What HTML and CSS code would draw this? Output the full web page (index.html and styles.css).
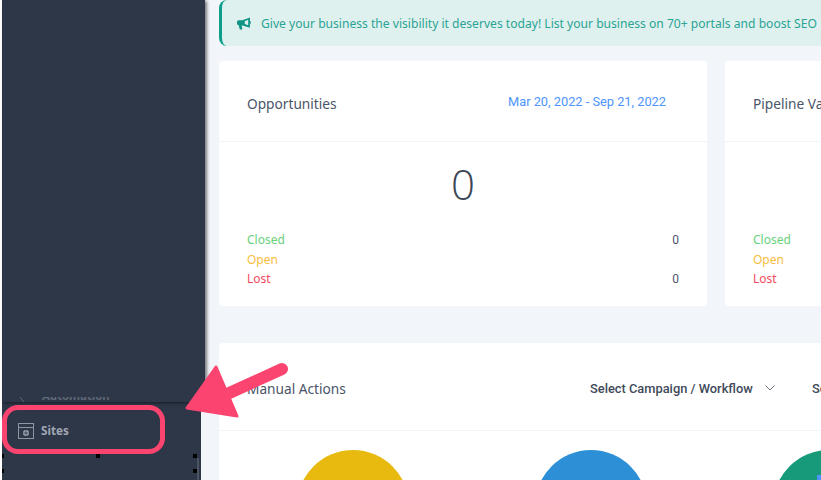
FILE: index.html
```html
<!DOCTYPE html>
<html lang="en">
<head>
  <meta charset="UTF-8">
  <title>Dashboard</title>
  <link rel="stylesheet" href="styles.css">
</head>
<body>
  <div class="page">
    <!-- Sidebar -->
    <aside class="sidebar">
      <div class="sidebar-panel">
        <div class="panel-peek">
          <svg width="6" height="6" viewBox="0 0 6 6" fill="none" stroke="#5f6876"><path d="M1 0L5 5"/></svg>
          <span>Automation</span>
        </div>
      </div>
      <div class="nav-item">
        <svg class="nav-icon" width="16" height="16" viewBox="0 0 16 16" fill="none" stroke="#8f96a3" stroke-width="1">
          <rect x="0.5" y="0.5" width="15" height="15"/>
          <path d="M0.5 4.5H15.5"/>
          <circle cx="8" cy="10" r="3" fill="#a0a7b3" stroke="none"/>
          <path d="M8 7.5V12.5M5.5 10H10.5" stroke="#2d3748" stroke-width="0.8"/>
        </svg>
        <span>Sites</span>
      </div>
    </aside>

    <!-- Main content -->
    <main class="main">
      <div class="banner">
        <svg class="banner-icon" width="14" height="13" viewBox="0 0 13 12" fill="#0e9384">
          <path d="M12 0.5 L5 3 H1.5 C0.7 3 0 3.7 0 4.5 V6 C0 6.8 0.7 7.5 1.5 7.5 L2.6 11.5 H5 L4.3 7.6 L12 10 Z"/>
          <path d="M12.2 3.4 C13.2 4 13.2 6.2 12.2 6.8 Z"/>
          <path d="M10.4 2.6 L7.2 3.9 V6.4 L10.4 7.7 Z" fill="#dff1ef"/>
        </svg>
        <span class="banner-text">Give your business the visibility it deserves today! List your business on 70+ portals and boost SEO</span>
      </div>

      <div class="card-row">
        <section class="card stat-card">
          <div class="card-head">
            <h2>Opportunities</h2>
            <span class="date-range">Mar 20, 2022 - Sep 21, 2022</span>
          </div>
          <div class="stat-body">
            <div class="stat-total">0</div>
            <div class="stat-line"><span class="closed">Closed</span><span class="num">0</span></div>
            <div class="stat-line"><span class="open">Open</span></div>
            <div class="stat-line"><span class="lost">Lost</span><span class="num">0</span></div>
          </div>
        </section>
        <section class="card stat-card">
          <div class="card-head">
            <h2>Pipeline Value</h2>
          </div>
          <div class="stat-body">
            <div class="stat-total">&nbsp;</div>
            <div class="stat-line"><span class="closed">Closed</span></div>
            <div class="stat-line"><span class="open">Open</span></div>
            <div class="stat-line"><span class="lost">Lost</span></div>
          </div>
        </section>
      </div>

      <section class="card actions-card">
        <div class="actions-head">
          <h2>Manual Actions</h2>
          <div class="filters">
            <span class="filter">Select Campaign / Workflow
              <svg width="10" height="6" viewBox="0 0 10 6" fill="none" stroke="#6b7280" stroke-width="1"><path d="M0.5 0.5L5 5L9.5 0.5"/></svg>
            </span>
            <span class="filter">Select User</span>
          </div>
        </div>
        <div class="circles">
          <div class="circle yellow"></div>
          <div class="circle blue"></div>
          <div class="circle green"></div>
        </div>
      </section>
    </main>
  </div>

  <!-- Annotations on top of the screenshot -->
  <div class="highlight"></div>
  <i class="handle h1"></i><i class="handle h2"></i><i class="handle h3"></i><i class="handle h4"></i><i class="handle h5"></i>
  <i class="resize-edge"></i>
  <i class="corner-mark"></i>
  <svg class="arrow" width="110" height="70" viewBox="184 358 110 70">
    <path d="M282 369 L225 395" stroke="#fb4570" stroke-width="12" stroke-linecap="round" fill="none"/>
    <path d="M216 367 L237 416 L187 408 Z" fill="#fb4570" stroke="#fb4570" stroke-width="3" stroke-linejoin="round"/>
  </svg>
</body>
</html>
```

FILE: styles.css
```css
/* General */
html, body {
  margin: 0;
  padding: 0;
  height: 480px;
  overflow: hidden;
  background: #fff;
}

body {
  position: relative;
  font-family: 'Noto Sans', sans-serif;
  color: #4a5568;
}

.page {
  display: flex;
  height: 480px;
  padding-left: 2px;
  box-sizing: border-box;
}

/* Sidebar */
.sidebar {
  flex: 0 0 199px;
  min-width: 0;
  background: #2d3748;
  position: relative;
  z-index: 1;
}

.sidebar-panel {
  display: flex;
  align-items: flex-end;
  width: 203px;
  height: 402px;
  background: #2d3748;
  box-shadow: 2px 1px 3px rgba(0, 0, 0, 0.5);
}

.panel-peek {
  display: flex;
  align-items: flex-start;
  height: 5px;
  overflow: hidden;
  padding-left: 17px;
  font-size: 11.3px;
  font-weight: 700;
  line-height: 5px;
  color: #5f6876;
}

.panel-peek span {
  margin-left: 17px;
  position: relative;
  top: -4px;
}

.nav-item {
  display: flex;
  align-items: center;
  gap: 7px;
  padding: 21px 0 0 16px;
  font-size: 11.7px;
  font-weight: 700;
  color: #a0a7b3;
}

.nav-item span {
  position: relative;
  top: -1px;
}

/* Main */
.main {
  flex: 1;
  min-width: 0;
  background: #f2f6fa;
  padding-left: 18px;
  overflow: hidden;
}

.banner {
  display: flex;
  align-items: center;
  width: 640px;
  height: 46px;
  box-sizing: border-box;
  padding-left: 15px;
  background: #dff1ef;
  border-left: 3px solid #0e9e8c;
  border-radius: 8px 0 0 8px;
  white-space: nowrap;
}

.banner-icon {
  flex: none;
  margin-right: 10px;
}

.banner-text {
  font-size: 12.1px;
  color: #2aa394;
}

.card {
  background: #fff;
  border-radius: 4px;
}

.card h2 {
  margin: 0;
  font-size: 13.7px;
  font-weight: 400;
  color: #4a5568;
  white-space: nowrap;
}

.card-row {
  display: flex;
  gap: 18px;
  margin-top: 15px;
  width: 1000px;
}

/* Stat cards */
.stat-card {
  flex: 0 0 488px;
  height: 245px;
}

.card-head {
  display: flex;
  align-items: center;
  justify-content: space-between;
  height: 81px;
  box-sizing: border-box;
  padding: 4px 41px 0 28px;
  border-bottom: 1px solid #f0f4f8;
}

.date-range {
  font-family: Roboto, sans-serif;
  font-size: 12.8px;
  color: #4d94ff;
  margin-bottom: 4px;
}

.stat-body {
  padding: 0 28px;
}

.stat-total {
  height: 88px;
  padding-top: 13px;
  box-sizing: border-box;
  text-align: center;
  font-family: 'Open Sans', sans-serif;
  font-size: 42px;
  line-height: 58px;
  font-weight: 300;
  color: #3c4656;
}

.stat-line {
  display: flex;
  justify-content: space-between;
  height: 19.5px;
  line-height: 20.5px;
  font-size: 12px;
}

.num {
  font-family: Roboto, sans-serif;
  color: #4a5568;
}

.closed { color: #68d27a; }
.open { color: #f9bd3d; }
.lost { color: #f4495d; }

/* Manual actions */
.actions-card {
  width: 700px;
  height: 200px;
  margin-top: 37px;
}

.actions-head {
  display: flex;
  align-items: center;
  justify-content: space-between;
  height: 88px;
  box-sizing: border-box;
  padding: 4px 0 0 28px;
  border-bottom: 1px solid #f0f4f8;
}

.filters {
  display: flex;
  gap: 37px;
  font-family: Roboto, sans-serif;
  font-size: 12.85px;
  font-weight: 500;
  color: #3f4a5a;
  white-space: nowrap;
  width: 320px;
  margin-right: 9px;
}

.filter svg {
  margin-left: 9px;
  vertical-align: 2px;
}

.circles {
  display: flex;
  gap: 126px;
  padding: 19px 0 0 78px;
}

.circle {
  flex: none;
  width: 112px;
  height: 112px;
  border-radius: 50%;
}

.yellow { background: #e8ba10; }
.blue { background: #2d8fd5; }
.green { background: #169a7a; }

/* Annotations */
.highlight {
  position: absolute;
  z-index: 2;
  left: 2px;
  top: 405px;
  width: 153px;
  height: 39px;
  border: 5px solid #fb4570;
  border-radius: 16px;
}

.handle {
  position: absolute;
  z-index: 2;
  width: 4px;
  height: 4px;
  background: #000;
}

.h1 { left: 2px; top: 454px; width: 2px; }
.h2 { left: 96px; top: 454px; }
.h3 { left: 193px; top: 454px; }
.h4 { left: 2px; top: 469px; width: 2px; }
.h5 { left: 193px; top: 469px; }

.resize-edge {
  position: absolute;
  z-index: 2;
  left: 197px;
  top: 458px;
  width: 2px;
  height: 22px;
  background: #4a5361;
}

.corner-mark {
  position: absolute;
  left: 817px;
  top: 475px;
  width: 4px;
  height: 5px;
  background: #4d94ff;
}

.arrow {
  position: absolute;
  z-index: 3;
  left: 184px;
  top: 358px;
}
```
